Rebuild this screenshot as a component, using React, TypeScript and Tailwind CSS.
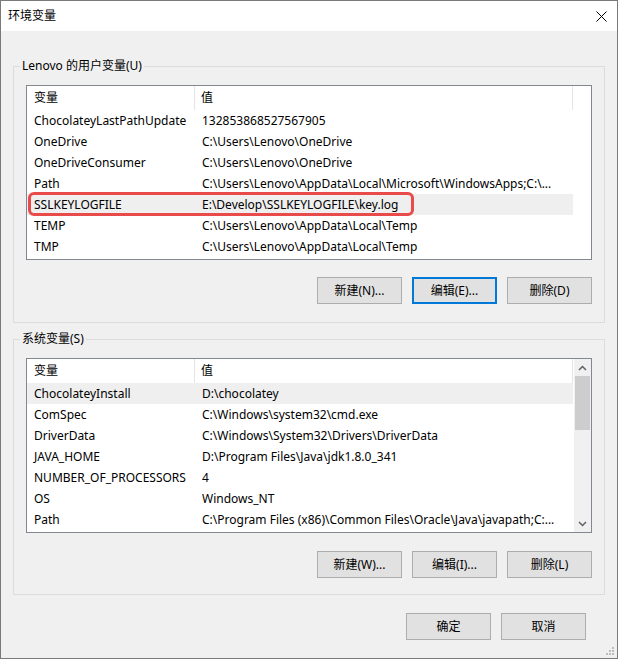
import React from "react";

type Row = { name: string; value: string };

const userVars: Row[] = [
  { name: "ChocolateyLastPathUpdate", value: "132853868527567905" },
  { name: "OneDrive", value: "C:\\Users\\Lenovo\\OneDrive" },
  { name: "OneDriveConsumer", value: "C:\\Users\\Lenovo\\OneDrive" },
  { name: "Path", value: "C:\\Users\\Lenovo\\AppData\\Local\\Microsoft\\WindowsApps;C:\\..." },
  { name: "SSLKEYLOGFILE", value: "E:\\Develop\\SSLKEYLOGFILE\\key.log" },
  { name: "TEMP", value: "C:\\Users\\Lenovo\\AppData\\Local\\Temp" },
  { name: "TMP", value: "C:\\Users\\Lenovo\\AppData\\Local\\Temp" },
];

const sysVars: Row[] = [
  { name: "ChocolateyInstall", value: "D:\\chocolatey" },
  { name: "ComSpec", value: "C:\\Windows\\system32\\cmd.exe" },
  { name: "DriverData", value: "C:\\Windows\\System32\\Drivers\\DriverData" },
  { name: "JAVA_HOME", value: "D:\\Program Files\\Java\\jdk1.8.0_341" },
  { name: "NUMBER_OF_PROCESSORS", value: "4" },
  { name: "OS", value: "Windows_NT" },
  { name: "Path", value: "C:\\Program Files (x86)\\Common Files\\Oracle\\Java\\javapath;C:..." },
];

const Btn = ({ label, primary }: { label: string; primary?: boolean }) => (
  <button
    className={
      primary
        ? "w-[85px] h-[27px] bg-[#e1e1e1] border-2 border-[#0078d7] text-[12px] text-black"
        : "w-[85px] h-[27px] bg-[#e1e1e1] border border-[#adadad] text-[12px] text-black"
    }
  >
    {label}
  </button>
);

const VarList = ({
  rows,
  selected,
  marked,
  scroll,
}: {
  rows: Row[];
  selected: number;
  marked?: boolean;
  scroll?: boolean;
}) => (
  <div className="flex h-[175px] border border-[#828790] bg-white">
    <div className="flex-1 min-w-0">
      <div className="flex h-[24px] items-center">
        <div className="w-[168px] h-full flex items-center pl-[7px] border-r border-[#e5e5e5]">变量</div>
        <div className="w-[378px] h-full flex items-center pl-[6px] border-r border-[#e5e5e5]">值</div>
      </div>
      {rows.map((r, i) => (
        <div
          key={i}
          className={
            i === selected
              ? "relative flex w-[546px] h-[21px] items-center bg-[#efefef]"
              : "relative flex w-[546px] h-[21px] items-center"
          }
        >
          <div className="w-[168px] pl-[7px] whitespace-nowrap overflow-hidden">{r.name}</div>
          <div className="w-[378px] pl-[7px] whitespace-nowrap overflow-hidden">{r.value}</div>
          {marked && i === selected && (
            <div className="absolute left-[1px] top-[-2px] w-[386px] h-[24px] border-[3px] border-[#e94b4b] rounded-[6px]" />
          )}
        </div>
      ))}
    </div>
    {scroll && (
      <div className="w-[17px] bg-[#f0f0f0] flex flex-col">
        <div className="h-[17px] flex items-center justify-center">
          <svg width="9" height="6" viewBox="0 0 9 6">
            <path d="M1 5 L4.5 1.5 L8 5" stroke="#606060" strokeWidth="1.5" fill="none" />
          </svg>
        </div>
        <div className="mx-[1px] h-[54px] bg-[#cdcdcd]" />
        <div className="flex-1" />
        <div className="h-[17px] flex items-center justify-center">
          <svg width="9" height="6" viewBox="0 0 9 6">
            <path d="M1 1 L4.5 4.5 L8 1" stroke="#606060" strokeWidth="1.5" fill="none" />
          </svg>
        </div>
      </div>
    )}
  </div>
);

const Group = ({ title, children }: { title: string; children: React.ReactNode }) => (
  <fieldset className="mx-[12px] border border-[#dcdcdc]">
    <legend className="ml-[6px] px-[2px] h-[16px] leading-[16px]">{title}</legend>
    <div className="px-[12px]">{children}</div>
  </fieldset>
);

export default function App() {
  return (
    <div
      className="relative w-[618px] h-[659px] border border-[#7a7a7a] bg-[#f0f0f0] text-[12px] text-black flex flex-col"
      style={{ fontFamily: '"Noto Sans", "Noto Sans CJK SC", sans-serif' }}
    >
      <div className="h-[30px] bg-white flex items-center justify-between pl-[7px] pr-[10px]">
        <span>环境变量</span>
        <svg width="11" height="11" viewBox="0 0 11 11">
          <path d="M0.5 0.5 L10.5 10.5 M10.5 0.5 L0.5 10.5" stroke="#000" strokeWidth="1" />
        </svg>
      </div>

      <div className="mt-[27px]">
        <Group title="Lenovo 的用户变量(U)">
          <div className="mt-[11px]">
            <VarList rows={userVars} selected={4} marked />
          </div>
          <div className="flex justify-end gap-[10px] mt-[17px] mb-[18px]">
            <Btn label="新建(N)..." />
            <Btn label="编辑(E)..." primary />
            <Btn label="删除(D)" />
          </div>
        </Group>
      </div>

      <div className="mt-[8px]">
        <Group title="系统变量(S)">
          <div className="mt-[11px]">
            <VarList rows={sysVars} selected={0} scroll />
          </div>
          <div className="flex justify-end gap-[10px] mt-[18px] mb-[16px]">
            <Btn label="新建(W)..." />
            <Btn label="编辑(I)..." />
            <Btn label="删除(L)" />
          </div>
        </Group>
      </div>

      <div className="flex justify-end gap-[10px] mt-[18px] pr-[31px]">
        <Btn label="确定" />
        <Btn label="取消" />
      </div>

      <svg className="absolute right-[3px] bottom-[3px]" width="8" height="8" viewBox="0 0 8 8">
        <rect x="6" y="0" width="2" height="2" fill="#bcbcbc" />
        <rect x="3" y="3" width="2" height="2" fill="#bcbcbc" />
        <rect x="6" y="3" width="2" height="2" fill="#bcbcbc" />
        <rect x="0" y="6" width="2" height="2" fill="#bcbcbc" />
        <rect x="3" y="6" width="2" height="2" fill="#bcbcbc" />
        <rect x="6" y="6" width="2" height="2" fill="#bcbcbc" />
      </svg>
    </div>
  );
}
